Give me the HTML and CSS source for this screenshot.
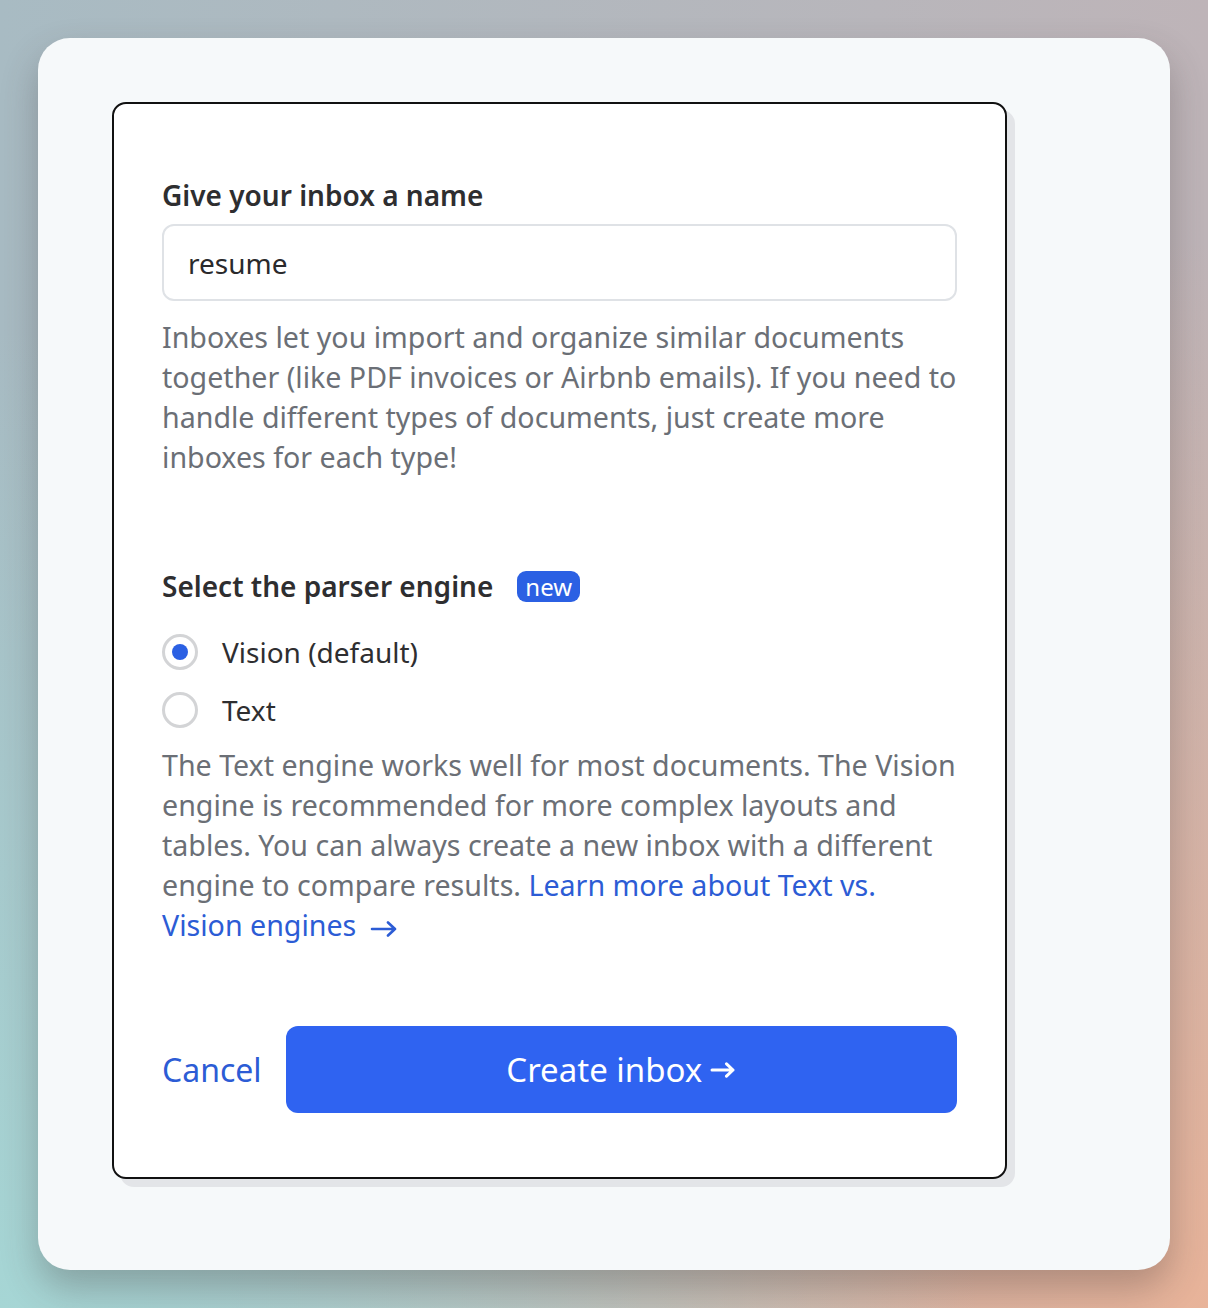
FILE: index.html
```html
<!DOCTYPE html>
<html lang="en">
<head>
    <meta charset="UTF-8">
    <meta name="viewport" content="width=device-width, initial-scale=1.0">
    <title>New inbox</title>
    <link rel="stylesheet" href="styles.css">
</head>
<body>
    <div class="window">
        <form class="dialog">
            <label class="field-label" for="inboxName">Give your inbox a name</label>
            <input class="text-input" id="inboxName" type="text" value="resume">
            <p class="hint">Inboxes let you import and organize similar documents together (like PDF invoices or Airbnb emails). If you need to handle different types of documents, just create more inboxes for each type!</p>

            <div class="engine">
                <div class="field-label engine-title">
                    Select the parser engine
                    <span class="badge">new</span>
                </div>
                <label class="radio">
                    <span class="radio-dot checked"></span>
                    Vision (default)
                </label>
                <label class="radio">
                    <span class="radio-dot"></span>
                    Text
                </label>
                <p class="hint">The Text engine works well for most documents. The Vision engine is recommended for more complex layouts and tables. You can always create a new inbox with a different engine to compare results. <a href="#" class="link">Learn more about Text vs. Vision engines <svg class="arrow" width="28" height="16" viewBox="0 0 28 16" fill="none" stroke="currentColor" stroke-width="2.6" stroke-linecap="round" stroke-linejoin="round"><path d="M2 8h23M18 1.5l7 6.5-7 6.5"/></svg></a></p>
            </div>

            <div class="actions">
                <a href="#" class="cancel">Cancel</a>
                <button type="button" class="primary">
                    Create inbox
                    <svg width="26" height="16" viewBox="0 0 26 16" fill="none" stroke="currentColor" stroke-width="3" stroke-linecap="round" stroke-linejoin="round"><path d="M2 8h21M16.5 1.8l6.5 6.2-6.5 6.2"/></svg>
                </button>
            </div>
        </form>
    </div>
</body>
</html>
```

FILE: styles.css
```css
body {
    margin: 0;
    min-height: 1308px;
    font-family: "Noto Sans", "Open Sans", sans-serif;
    background:
        radial-gradient(circle at 0% 100%, #a6d6d5 0, rgba(166, 214, 213, 0) 55%),
        radial-gradient(circle at 100% 100%, #e8b399 0, rgba(232, 179, 153, 0) 60%),
        linear-gradient(to right, #a8bbc3, #beb4b8);
    padding: 38px;
    box-sizing: border-box;
}
.window {
    width: 1132px;
    height: 1232px;
    box-sizing: border-box;
    background-color: #f6f9fa;
    border-radius: 32px;
    box-shadow: 0 18px 36px rgba(60, 50, 50, 0.3);
    padding: 64px 74px;
}
.dialog {
    width: 895px;
    height: 1077px;
    box-sizing: border-box;
    background-color: #fff;
    border: 2px solid #111;
    border-radius: 14px;
    box-shadow: 8px 8px 0 #e3e5e8;
    padding: 73px 48px 64px;
    display: flex;
    flex-direction: column;
}
.field-label {
    display: block;
    font-size: 28px;
    line-height: 36px;
    font-weight: 600;
    color: #2e2e30;
}
.text-input {
    margin-top: 11px;
    height: 77px;
    box-sizing: border-box;
    border: 2px solid #dfe2e6;
    border-radius: 12px;
    padding: 0 24px;
    font-family: inherit;
    font-size: 28px;
    color: #2a2a2c;
    outline: none;
}
.hint {
    margin: 16px 0 0;
    font-size: 28.6px;
    line-height: 40px;
    color: #6b6f76;
}
.engine {
    margin-top: 91px;
}
.engine-title {
    display: flex;
    align-items: center;
    gap: 24px;
}
.badge {
    background-color: #2b60e3;
    color: #fff;
    font-size: 24px;
    font-weight: 400;
    line-height: 31px;
    padding: 0 8px;
    border-radius: 9px;
}
.radio {
    display: flex;
    align-items: center;
    gap: 24px;
    height: 58px;
    font-size: 28px;
    color: #2e2e30;
}
.engine-title + .radio {
    margin-top: 19px;
}
.radio-dot {
    width: 36px;
    height: 36px;
    box-sizing: border-box;
    border: 3px solid #d3d4d6;
    border-radius: 50%;
    display: flex;
    align-items: center;
    justify-content: center;
}
.radio-dot.checked::after {
    content: "";
    width: 16px;
    height: 16px;
    border-radius: 50%;
    background-color: #2b60e3;
}
.engine .hint {
    margin-top: 6px;
}
.link {
    color: #2c5cd5;
    text-decoration: none;
}
.arrow {
    margin-left: 6px;
    vertical-align: -1px;
}
.actions {
    margin-top: auto;
    display: flex;
    align-items: center;
    gap: 24px;
}
.cancel {
    font-size: 32px;
    color: #2c5cd5;
    text-decoration: none;
}
.primary {
    flex: 1;
    height: 87px;
    border: none;
    border-radius: 12px;
    background-color: #2f63f1;
    color: #fff;
    font-family: inherit;
    font-size: 33px;
    cursor: pointer;
    display: flex;
    align-items: center;
    justify-content: center;
    gap: 8px;
}
```
